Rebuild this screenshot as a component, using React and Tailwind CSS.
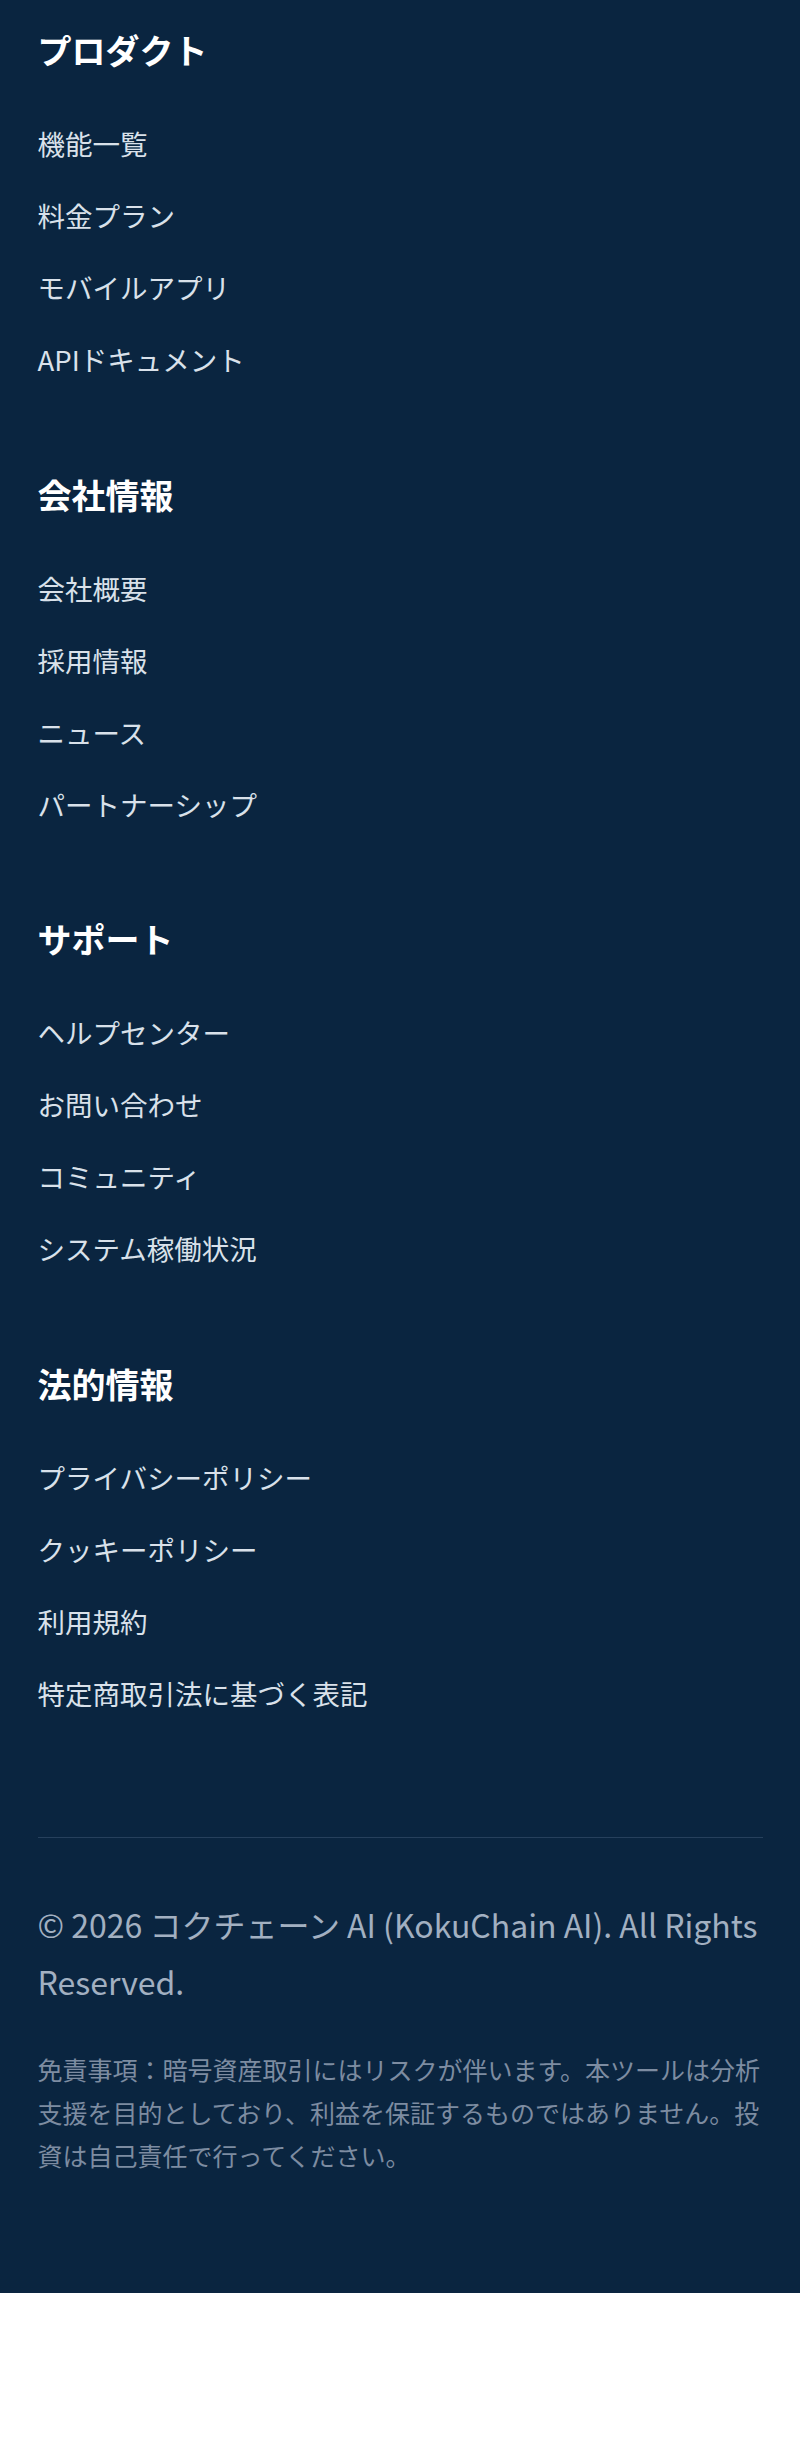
import React from 'react';

const sections = [
  {
    title: 'プロダクト',
    links: ['機能一覧', '料金プラン', 'モバイルアプリ', 'APIドキュメント'],
  },
  {
    title: '会社情報',
    links: ['会社概要', '採用情報', 'ニュース', 'パートナーシップ'],
  },
  {
    title: 'サポート',
    links: ['ヘルプセンター', 'お問い合わせ', 'コミュニティ', 'システム稼働状況'],
  },
  {
    title: '法的情報',
    links: ['プライバシーポリシー', 'クッキーポリシー', '利用規約', '特定商取引法に基づく表記'],
  },
];

export default function App() {
  return (
    <footer className="bg-[#0a2540] px-[37.5px] pt-[25px] pb-[116px] font-['Noto_Sans_CJK_JP',sans-serif]">
      <div className="flex flex-col gap-[88.5px]">
        {sections.map((section) => (
          <div key={section.title}>
            <h3 className="text-[34px] leading-[50px] font-bold text-white mb-[46px]">
              {section.title}
            </h3>
            <ul className="flex flex-col gap-[28px]">
              {section.links.map((link) => (
                <li key={link}>
                  <a href="#" className="text-[27.5px] leading-[44px] text-[#d9e1ea]">
                    {link}
                  </a>
                </li>
              ))}
            </ul>
          </div>
        ))}
      </div>

      <div className="mt-[122px] border-t border-[#26405c] pt-[58px]">
        <p className="text-[32px] leading-[57px] text-[#a2b0c1]">
          © 2026 コクチェーン AI (KokuChain AI). All Rights Reserved.
        </p>
        <p className="mt-[38px] text-[25px] leading-[43px] text-[#7d8ca1]">
          免責事項：暗号資産取引にはリスクが伴います。本ツールは分析支援を目的としており、利益を保証するものではありません。投資は自己責任で行ってください。
        </p>
      </div>
    </footer>
  );
}
